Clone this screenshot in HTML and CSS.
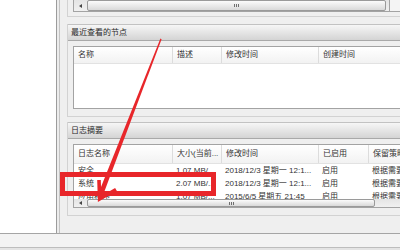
FILE: index.html
```html
<!DOCTYPE html>
<html lang="zh-CN">
<head>
<meta charset="utf-8">
<title>事件查看器</title>
<link rel="stylesheet" href="styles.css">
</head>
<body>
<div class="screen">
  <div class="main">
    <div class="nav"></div>
    <div class="split"></div>
    <div class="content">
      <div class="section cut">
        <div class="box box-cut">
          <div class="hscroll hscroll-a">
            <div class="arrow"></div>
            <div class="track"><div class="thumb thumb-a"><span class="grip"></span></div></div>
            <div class="corner"></div>
          </div>
        </div>
      </div>

      <div class="section gap">
        <div class="title">最近查看的节点</div>
        <div class="body">
          <div class="box">
            <div class="grid head head-b">
              <div class="cell">名称</div>
              <div class="cell">描述</div>
              <div class="cell">修改时间</div>
              <div class="cell">创建时间</div>
            </div>
            <div class="rows rows-b"></div>
          </div>
        </div>
      </div>

      <div class="section">
        <div class="title">日志摘要</div>
        <div class="body">
          <div class="box">
            <div class="grid head head-c">
              <div class="cell">日志名称</div>
              <div class="cell">大小(当前...</div>
              <div class="cell">修改时间</div>
              <div class="cell">已启用</div>
              <div class="cell">保留策略</div>
            </div>
            <div class="rows rows-c">
              <div class="grid row">
                <div class="cell">安全</div>
                <div class="cell">1.07 MB/...</div>
                <div class="cell">2018/12/3 星期一 12:1...</div>
                <div class="cell">启用</div>
                <div class="cell">根据需要覆盖事件</div>
              </div>
              <div class="grid row">
                <div class="cell">系统</div>
                <div class="cell">2.07 MB/...</div>
                <div class="cell">2018/12/3 星期一 12:1...</div>
                <div class="cell">启用</div>
                <div class="cell">根据需要覆盖事件</div>
              </div>
              <div class="grid row">
                <div class="cell">应用程序</div>
                <div class="cell">1.07 MB/...</div>
                <div class="cell">2015/6/5 星期五 21:45</div>
                <div class="cell">启用</div>
                <div class="cell">根据需要覆盖事件</div>
              </div>
            </div>
            <div class="hscroll hscroll-c">
              <div class="arrow"></div>
              <div class="track"><div class="thumb thumb-c"><span class="grip"></span></div></div>
            </div>
          </div>
        </div>
      </div>
    </div>
  </div>
  <div class="status">
    <div class="status-top"></div>
    <div class="status-bottom"></div>
  </div>

  <div class="mark-rect"></div>
  <svg class="mark-arrow" width="400" height="250" viewBox="0 0 400 250">
    <polygon points="160.4,38.6 161.6,39.2 102.3,197 97.7,195.2" fill="#e8262a"/>
    <polyline points="99,180 99.6,199 116,189.5" fill="none" stroke="#e8262a" stroke-width="3.6" stroke-linejoin="miter"/>
  </svg>
</div>
</body>
</html>
```

FILE: styles.css
```css
html, body {
  margin: 0;
  padding: 0;
}

body {
  width: 400px;
  height: 250px;
  overflow: hidden;
  background: #f0f0f0;
  color: #333;
  font-family: "Liberation Sans", "Noto Sans CJK SC", sans-serif;
  font-size: 8px;
}

.screen {
  position: relative;
  width: 400px;
  height: 250px;
  overflow: hidden;
}

.main {
  display: flex;
  height: 233px;
}

.nav {
  width: 56px;
  background: #fff;
  border-right: 1px solid #9c9c9c;
}

.split {
  width: 2px;
  background: #ececec;
  border-right: 1px solid #c4c4c4;
}

.content {
  flex: 1;
  min-width: 0;
  background: #efefef;
  padding-left: 7px;
  overflow: hidden;
}

.section {
  border-left: 1px solid #d2d2d2;
  border-bottom: 1px solid #d2d2d2;
}

.section.cut {
  padding: 0 0 4px 5px;
  margin-bottom: 7px;
}

.section.gap {
  margin-bottom: 5px;
}

.title {
  height: 15px;
  line-height: 15px;
  padding-left: 3px;
  background: linear-gradient(#f6f6f6, #d4d4d4);
  border-top: 1px solid #c2c2c2;
  border-bottom: 1px solid #a9a9a9;
  color: #2a2a2a;
  white-space: nowrap;
}

.body {
  padding: 5px 0 7px 5px;
}

.box {
  background: #fff;
  border: 1px solid #a3a3a3;
  border-right: none;
}

.box-cut {
  border-top: none;
}

.grid {
  display: grid;
  grid-template-columns: 98px 49px 97px 50px 1fr;
}

.head-b {
  grid-template-columns: 98px 49px 97px 1fr;
}

.cell {
  padding-left: 4px;
  white-space: nowrap;
  overflow: hidden;
}

.head {
  background: linear-gradient(#ffffff, #f2f2f2);
  border-bottom: 1px solid #e2e2e2;
}

.head .cell + .cell {
  border-left: 1px solid #dcdcdc;
}

.head-b {
  height: 16px;
  line-height: 16px;
}

.head-c {
  height: 18px;
  line-height: 18px;
}

.rows-b {
  height: 44px;
}

.rows-c {
  height: 35px;
  overflow: hidden;
}

.row {
  height: 13px;
  line-height: 13px;
}

.hscroll {
  display: flex;
  background: linear-gradient(#e4e4e4, #f0f0f0);
}

.hscroll-a {
  height: 11px;
}

.hscroll-c {
  height: 8px;
}

.arrow {
  width: 13px;
  display: flex;
  align-items: center;
  justify-content: center;
}

.arrow::before {
  content: "";
  border-top: 2px solid transparent;
  border-bottom: 2px solid transparent;
  border-right: 3px solid #444;
}

.track {
  flex: 1;
  display: flex;
}

.thumb {
  box-sizing: border-box;
  height: 100%;
  display: flex;
  align-items: center;
  justify-content: center;
  background: linear-gradient(#fbfbfb, #d9d9d9);
  border: 1px solid #9a9a9a;
  border-radius: 2px;
}

.thumb-a {
  width: 299px;
}

.thumb-c {
  width: 288px;
}

.grip {
  width: 5px;
  height: 3px;
  background: repeating-linear-gradient(90deg, #6f6f6f 0 1px, transparent 1px 2px);
}

.corner {
  width: 10px;
  border-left: 1px solid #a3a3a3;
  background: #f4f4f4;
}

.status {
  height: 17px;
  display: flex;
  flex-direction: column;
  border-top: 1px solid #a5a5a5;
  box-sizing: border-box;
}

.status-top {
  height: 13px;
  background: #f3f3f3;
  border-bottom: 1px solid #bdbdbd;
}

.status-bottom {
  flex: 1;
  background: #e4e4e4;
}

.mark-rect {
  position: absolute;
  left: 60px;
  top: 172px;
  width: 156px;
  height: 24px;
  box-sizing: border-box;
  border: 5px solid #e8262a;
}

.mark-arrow {
  position: absolute;
  left: 0;
  top: 0;
  pointer-events: none;
}
```
